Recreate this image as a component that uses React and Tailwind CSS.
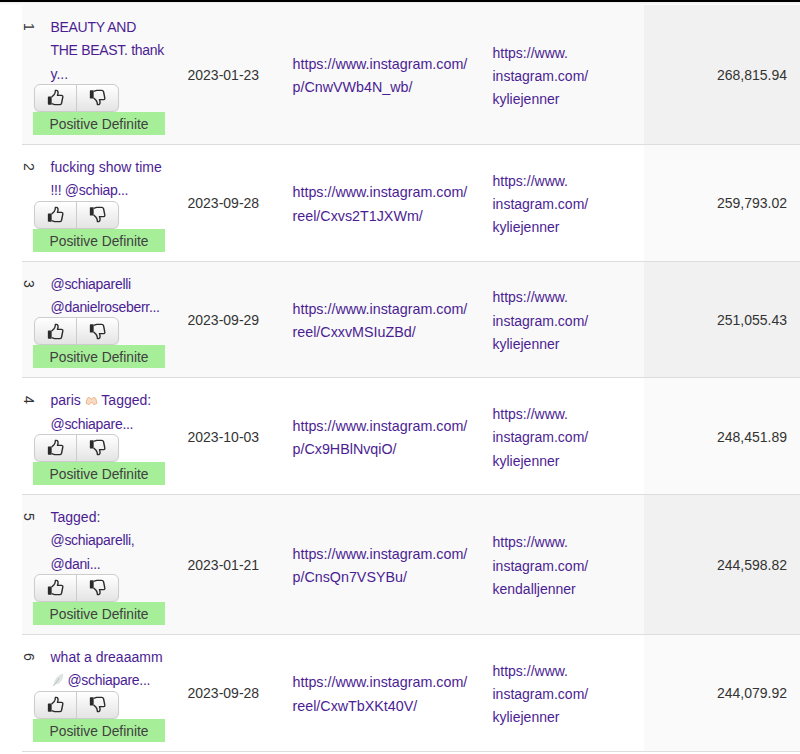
const rows = [
  { n: 1, text: [<Tight>BEAUTY AND</Tight>, <Tight>THE BEAST. thank</Tight>, "y..."], date: "2023-01-23", url: ["https://www.instagram.com/", "p/CnwVWb4N_wb/"], user: "kyliejenner", value: "268,815.94" },
  { n: 2, text: ["fucking show time", <Tight>!!! @schiap...</Tight>], date: "2023-09-28", url: ["https://www.instagram.com/", "reel/Cxvs2T1JXWm/"], user: "kyliejenner", value: "259,793.02" },
  { n: 3, text: [<Tight>@schiaparelli</Tight>, <Tight>@danielroseberr...</Tight>], date: "2023-09-29", url: ["https://www.instagram.com/", "reel/CxxvMSIuZBd/"], user: "kyliejenner", value: "251,055.43" },
  { n: 4, text: [<>paris <HandsEmoji /> Tagged:</>, <Tight>@schiapare...</Tight>], date: "2023-10-03", url: ["https://www.instagram.com/", "p/Cx9HBlNvqiO/"], user: "kyliejenner", value: "248,451.89" },
  { n: 5, text: ["Tagged:", <Tight>@schiaparelli,</Tight>, <Tight>@dani...</Tight>], date: "2023-01-21", url: ["https://www.instagram.com/", "p/CnsQn7VSYBu/"], user: "kendalljenner", value: "244,598.82" },
  { n: 6, text: ["what a dreaaamm", <><FeatherEmoji /> <Tight>@schiapare...</Tight></>], date: "2023-09-28", url: ["https://www.instagram.com/", "reel/CxwTbXKt40V/"], user: "kyliejenner", value: "244,079.92" },
];

function Tight({ children }) {
  return <span className="tracking-[-0.3px]">{children}</span>;
}

function HandsEmoji() {
  return (
    <svg viewBox="0 0 14 12" className="inline-block w-[13px] h-[11px] align-[-1px]">
      <path d="M1 9 L2.5 3.5 Q4 1.5 6.5 4 L7 5 L7.5 4 Q10 1.5 11.5 3.5 L13 9 L9.5 10.5 L7 7.5 L4.5 10.5 Z" fill="#f8dcc6" stroke="#eeb08a" strokeWidth="1" />
    </svg>
  );
}

function FeatherEmoji() {
  return (
    <svg viewBox="0 0 12 14" className="inline-block w-[12px] h-[14px] ml-px align-[-2px]">
      <path d="M1.5 13 L3 8 Q5 2.5 11 1 Q11 7 7 10 Q4.5 11.5 3 10.5 Z" fill="#dfe6e5" stroke="#d0d8d8" strokeWidth="0.5" />
      <path d="M1.5 13 L7.5 5" stroke="#aab6b6" strokeWidth="0.8" fill="none" />
    </svg>
  );
}

function Thumb({ down }) {
  return (
    <svg viewBox="0 0 16 16" className={`w-[17px] h-[17px] ${down ? "-scale-y-100" : ""}`}>
      <rect x="0.8" y="7" width="3.6" height="7.8" rx="0.6" fill="#2a2a2a" />
      <path
        d="M4.4 7.6 L6.6 5.4 Q7.9 3.8 7.9 1.4 Q10 0.8 10.4 3 Q10.5 4.6 9.8 6 H13.8 Q15.3 6.3 14.8 8 L13.7 13.4 Q13.3 14.7 12 14.7 H7.2 L4.4 13.8"
        fill="none"
        stroke="#2a2a2a"
        strokeWidth="1.3"
        strokeLinejoin="round"
      />
    </svg>
  );
}

function Row({ row, odd }) {
  return (
    <tr className={`border-b border-[#dddddd] ${odd ? "bg-[#f9f9f9]" : "bg-white"}`}>
      <td className="align-top pt-[18px] text-[14px] leading-none text-[#333333]">
        <span className="block [writing-mode:vertical-rl]">{row.n}</span>
      </td>
      <td className="align-top pt-[11px] pb-[9px]">
        <div className="pl-[17.5px] mb-[-2px] text-[#4b1d93] leading-[23.33px] whitespace-nowrap">
          {row.text.map((line, i) => (
            <div key={i}>{line}</div>
          ))}
        </div>
        <div className="flex w-[85px] h-[28px] ml-px rounded-[6px] border border-[#cccccc] bg-gradient-to-b from-white to-[#e4e4e4] shadow-[0_1px_1px_rgba(0,0,0,0.08)]">
          <div className="flex-1 flex items-center justify-center border-r border-[#cccccc]">
            <Thumb />
          </div>
          <div className="flex-1 flex items-center justify-center">
            <Thumb down />
          </div>
        </div>
        <div className="w-[132px] h-[23px] bg-[#a7ee99] text-center text-[13.8px] leading-[25px] text-[#404040]">Positive Definite</div>
      </td>
      <td className="pl-[12.5px] pt-[2px] text-[#333333]">{row.date}</td>
      <td className="pl-[12.5px] pt-[4px] text-[14.3px] text-[#4b1d93] leading-[23.33px]">
        {row.url.map((line) => (
          <div key={line}>{line}</div>
        ))}
      </td>
      <td className="pl-[12.5px] pt-[4px] text-[#4b1d93] leading-[23.33px]">
        <div>https://www.</div>
        <div>instagram.com/</div>
        <div>{row.user}</div>
      </td>
      <td className={`pr-[13px] pt-[2px] text-right text-[#333333] ${odd ? "bg-[#f1f1f1]" : "bg-[#fafafa]"}`}>{row.value}</td>
    </tr>
  );
}

export default function App() {
  return (
    <div className="w-[800px] h-[754px] overflow-hidden bg-white font-['Liberation_Sans',sans-serif] text-[14px]">
      <div className="h-[2px] bg-black" />
      <div className="h-[3px] bg-gradient-to-b from-[#eeeeee] to-white" />
      <div className="pl-[22px]">
        <table className="w-[778px] table-fixed border-collapse">
          <colgroup>
            <col className="w-[11px]" />
            <col className="w-[142px]" />
            <col className="w-[105px]" />
            <col className="w-[200px]" />
            <col className="w-[164px]" />
            <col className="w-[156px]" />
          </colgroup>
          <tbody>
            {rows.map((row, i) => (
              <Row key={row.n} row={row} odd={i % 2 === 0} />
            ))}
          </tbody>
        </table>
      </div>
    </div>
  );
}
